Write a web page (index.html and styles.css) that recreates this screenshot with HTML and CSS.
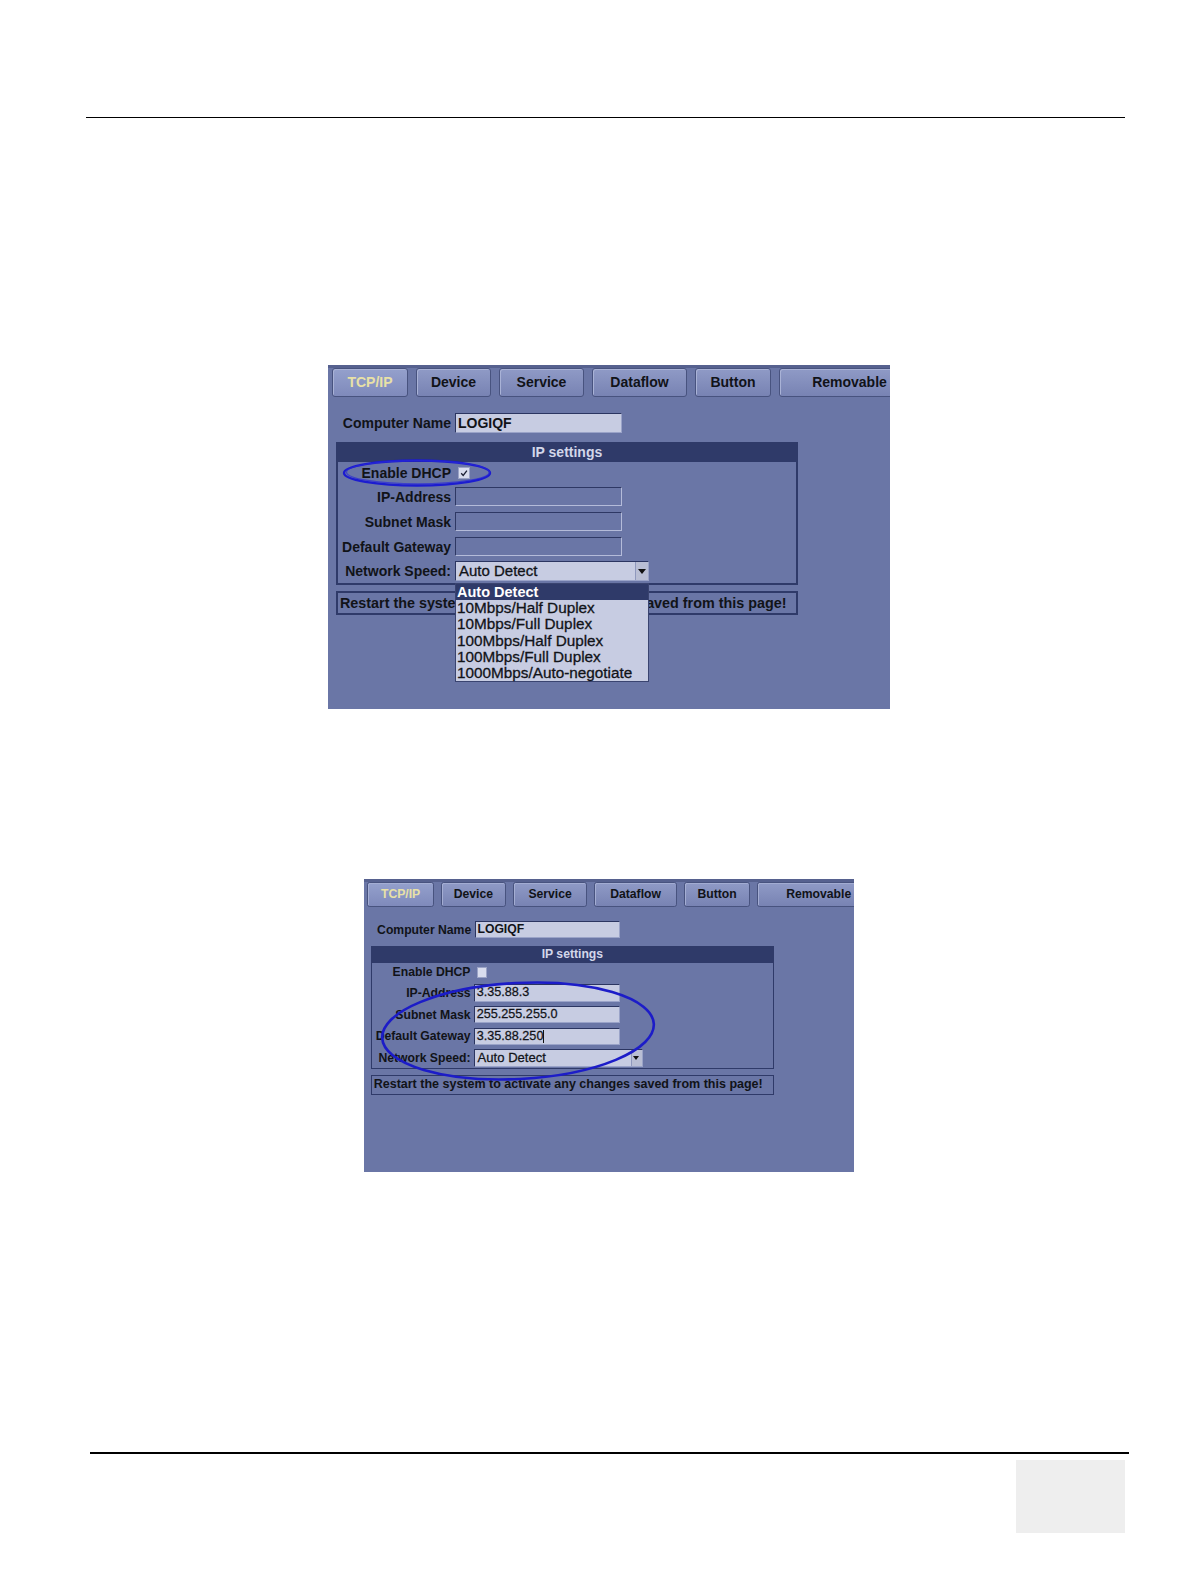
FILE: index.html
```html
<!DOCTYPE html>
<html lang="en">
<head>
  <meta charset="UTF-8"/>
  <title>TCP/IP settings</title>
  <link rel="stylesheet" href="styles.css">
</head>
<body>
  <div class="page">
    <!-- Header rule -->
    <div class="rule rule--top"></div>

    <!-- Figure 1: DHCP enabled, speed list open -->
    <div class="figure figure--open">
      <div class="panel">
        <div class="tabs">
          <div class="tab tab--tcp tab--active">TCP/IP</div>
          <div class="tab tab--device">Device</div>
          <div class="tab tab--service">Service</div>
          <div class="tab tab--dataflow">Dataflow</div>
          <div class="tab tab--button">Button</div>
          <div class="tab tab--removable">Removable</div>
        </div>
        <div class="name-row">
          <span class="label">Computer Name</span>
          <span class="field field--filled field--bold">LOGIQF</span>
        </div>
        <div class="group">
          <div class="group-title">IP settings</div>
          <div class="row row--first">
            <span class="label">Enable DHCP</span>
            <span class="check">
              <svg viewBox="0 0 10 10" width="10" height="10"><path d="M2.2 5.2 L4.2 7.4 L7.9 2.6" fill="none" stroke="#1b1f33" stroke-width="1.3"/></svg>
            </span>
          </div>
          <div class="row">
            <span class="label">IP-Address</span>
            <span class="field field--empty"></span>
          </div>
          <div class="row">
            <span class="label">Subnet Mask</span>
            <span class="field field--empty"></span>
          </div>
          <div class="row">
            <span class="label">Default Gateway</span>
            <span class="field field--empty"></span>
          </div>
          <div class="row row--last">
            <span class="label">Network Speed:</span>
            <span class="field field--filled field--select">Auto Detect<span class="arrow"></span></span>
          </div>
        </div>
        <div class="notice">Restart the system to activate any changes saved from this page!</div>

        <!-- Open list of the speed select -->
        <ul class="dropdown">
          <li class="dropdown-item dropdown-item--selected">Auto Detect</li>
          <li class="dropdown-item">10Mbps/Half Duplex</li>
          <li class="dropdown-item">10Mbps/Full Duplex</li>
          <li class="dropdown-item">100Mbps/Half Duplex</li>
          <li class="dropdown-item">100Mbps/Full Duplex</li>
          <li class="dropdown-item">1000Mbps/Auto-negotiate</li>
        </ul>
      </div>
      <!-- Hand-drawn marker around Enable DHCP -->
      <svg class="ring ring--dhcp" viewBox="0 0 152 30" width="152" height="30">
        <ellipse cx="75" cy="15" rx="73" ry="12.5" fill="none" stroke="#1c1cd0" stroke-width="2.4"/>
        <ellipse cx="76" cy="14.2" rx="71.5" ry="11.6" fill="none" stroke="#2a2ad8" stroke-width="1.2" opacity="0.7"/>
      </svg>
    </div>

    <!-- Figure 2: static addresses entered -->
    <div class="figure figure--static">
      <div class="panel panel--small">
        <div class="tabs">
          <div class="tab tab--tcp tab--active">TCP/IP</div>
          <div class="tab tab--device">Device</div>
          <div class="tab tab--service">Service</div>
          <div class="tab tab--dataflow">Dataflow</div>
          <div class="tab tab--button">Button</div>
          <div class="tab tab--removable">Removable</div>
        </div>
        <div class="name-row">
          <span class="label">Computer Name</span>
          <span class="field field--filled field--bold">LOGIQF</span>
        </div>
        <div class="group">
          <div class="group-title">IP settings</div>
          <div class="row row--first">
            <span class="label">Enable DHCP</span>
            <span class="check"></span>
          </div>
          <div class="row">
            <span class="label">IP-Address</span>
            <span class="field field--filled">3.35.88.3</span>
          </div>
          <div class="row">
            <span class="label">Subnet Mask</span>
            <span class="field field--filled">255.255.255.0</span>
          </div>
          <div class="row">
            <span class="label">Default Gateway</span>
            <span class="field field--filled">3.35.88.250<span class="caret"></span></span>
          </div>
          <div class="row row--last">
            <span class="label">Network Speed:</span>
            <span class="field field--filled field--select">Auto Detect<span class="arrow"></span></span>
          </div>
        </div>
        <div class="notice">Restart the system to activate any changes saved from this page!</div>
      </div>
      <!-- Hand-drawn marker around the address fields -->
      <svg class="ring ring--static" viewBox="0 0 280 104" width="280" height="104">
        <ellipse cx="139" cy="51" rx="136" ry="48" transform="rotate(-3 139 51)" fill="none" stroke="#1c1cc8" stroke-width="2.6"/>
      </svg>
    </div>

    <!-- Footer rule and page tab -->
    <div class="rule rule--bottom"></div>
    <div class="page-tab"></div>
  </div>
</body>
</html>
```

FILE: styles.css
```css
/* Screen colours of the settings dialog */
:root {
  --panel: #6a76a6;
  --strip: #56618f;
  --tab-top: #8f9ac6;
  --tab-bottom: #7883b3;
  --tab-border: #48537f;
  --navy: #2f3a69;
  --field: #c7cce2;
  --ink: #111318;
  --marker: #1c1cd0;
}

html,
body {
  overflow: hidden;
}

body {
  margin: 0;
  background: #ffffff;
  font-family: "Liberation Sans", Arial, sans-serif;
}

/* Whole document page */
.page {
  width: 1190px;
  height: 1584px;
  overflow: hidden;
  display: flex;
  flex-direction: column;
  align-items: flex-start;
}

.rule {
  height: 1.5px;
  background: #000;
  flex-shrink: 0;
}

.rule--top {
  margin: 116.5px 0 0 86px;
  width: 1039px;
}

.rule--bottom {
  margin: 280.5px 0 0 90px;
  width: 1039px;
}

.page-tab {
  margin: 6px 0 0 1016px;
  width: 109px;
  height: 73px;
  flex-shrink: 0;
  background: #eeeeee;
}

/* A screenshot placed on the page */
.figure {
  position: relative;
  flex-shrink: 0;
}

.figure--open {
  margin: 247px 0 0 328px;
}

.figure--static {
  margin: 170px 0 0 364px;
}

/* Dialog panel */
.panel {
  position: relative;
  width: 562px;
  height: 344px;
  overflow: hidden;
  background: var(--panel);
  color: var(--ink);
  font-size: 14px;
  font-weight: bold;
}

/* Second screenshot is the same dialog, captured smaller */
.panel--small {
  zoom: 0.872;
  height: 336px;
}

/* Tab strip */
.tabs {
  display: flex;
  gap: 8px;
  padding: 3px 0 0 4px;
  background: linear-gradient(var(--strip) 0, var(--strip) 3px, transparent 3px);
  white-space: nowrap;
}

.tab {
  flex-shrink: 0;
  box-sizing: border-box;
  height: 29px;
  line-height: 27px;
  text-align: center;
  border: 1px solid var(--tab-border);
  border-radius: 3px;
  background: linear-gradient(var(--tab-top), var(--tab-bottom));
  box-shadow: inset 1px 1px 0 #a9b2d6;
}

.tab--active {
  color: #e8e1a6;
  background: linear-gradient(#94a0cc, #7f8abb);
}

.tab--tcp { width: 76px; }
.tab--device { width: 75px; }
.tab--service { width: 85px; }
.tab--dataflow { width: 95px; }
.tab--button { width: 76px; }
.tab--removable { width: 141px; }

/* Label + field rows */
.name-row,
.row {
  display: grid;
  grid-template-columns: 113px auto;
  column-gap: 4px;
  align-items: center;
}

.name-row {
  grid-template-columns: 111px auto;
  padding-left: 12px;
  margin-top: 16px;
  height: 20px;
}

.label {
  text-align: right;
  white-space: nowrap;
}

.field {
  position: relative;
  box-sizing: border-box;
  width: 167px;
  height: 20px;
  line-height: 18px;
  padding-left: 2px;
  font-weight: normal;
  font-size: 14.5px;
  -webkit-text-stroke: 0.3px currentColor;
  white-space: nowrap;
}

.field--filled {
  background: var(--field);
  border-top: 1px solid #2b3561;
  border-left: 1px solid #2b3561;
  border-right: 1px solid #9aa3c8;
  border-bottom: 1px solid #9aa3c8;
}

.field--bold {
  font-weight: bold;
  font-size: 14px;
  -webkit-text-stroke: 0;
}

.field--empty {
  height: 19px;
  border-top: 1px solid #2e3864;
  border-left: 1px solid #2e3864;
  border-right: 1px solid #b4bbd9;
  border-bottom: 1px solid #b4bbd9;
}

.field--select {
  width: 194px;
  padding-left: 3px;
  font-size: 15px;
}

.arrow {
  position: absolute;
  right: 0;
  top: 0;
  width: 12px;
  height: 18px;
  background: #b9bed4;
  border-left: 1px solid #8f98bd;
}

.arrow::after {
  content: "";
  position: absolute;
  left: 2px;
  top: 7px;
  border-left: 4px solid transparent;
  border-right: 4px solid transparent;
  border-top: 5px solid #111;
}

.caret {
  display: inline-block;
  width: 1px;
  height: 15px;
  background: #111;
  vertical-align: middle;
}

/* IP settings group box */
.group {
  margin: 9px 0 0 8px;
  width: 462px;
  box-sizing: border-box;
  border: 2px solid var(--navy);
}

.group-title {
  height: 18px;
  line-height: 17px;
  text-align: center;
  color: #d3d7ea;
  background: var(--navy);
}

.row {
  height: 25px;
}

.row--first {
  height: 22px;
}

.row--last {
  height: 24px;
}

.check {
  width: 10px;
  height: 10px;
  margin-left: 3px;
  background: #d9ddee;
  border: 1px solid #9ba3c6;
  display: flex;
}

.notice {
  margin: 6px 0 0 8px;
  width: 462px;
  box-sizing: border-box;
  height: 24px;
  line-height: 20px;
  padding-left: 2px;
  font-size: 14.35px;
  border: 2px solid var(--navy);
  white-space: nowrap;
  overflow: hidden;
}

/* Open select list, lies over the notice */
.dropdown {
  position: absolute;
  left: 127px;
  top: 218px;
  width: 194px;
  box-sizing: border-box;
  margin: 0;
  padding: 0;
  list-style: none;
  background: var(--field);
  border: 1px solid #3a4470;
}

.dropdown-item {
  height: 16.2px;
  line-height: 16px;
  padding-left: 1px;
  font-size: 15.3px;
  font-weight: normal;
  -webkit-text-stroke: 0.3px currentColor;
  white-space: nowrap;
}

.dropdown-item--selected {
  color: #ffffff;
  font-weight: bold;
  font-size: 14.5px;
  -webkit-text-stroke: 0;
  background: var(--navy);
}

/* Annotation ellipses */
.ring {
  position: absolute;
  pointer-events: none;
}

.ring--dhcp {
  left: 14px;
  top: 93px;
}

.ring--static {
  left: 15px;
  top: 101px;
}
```
